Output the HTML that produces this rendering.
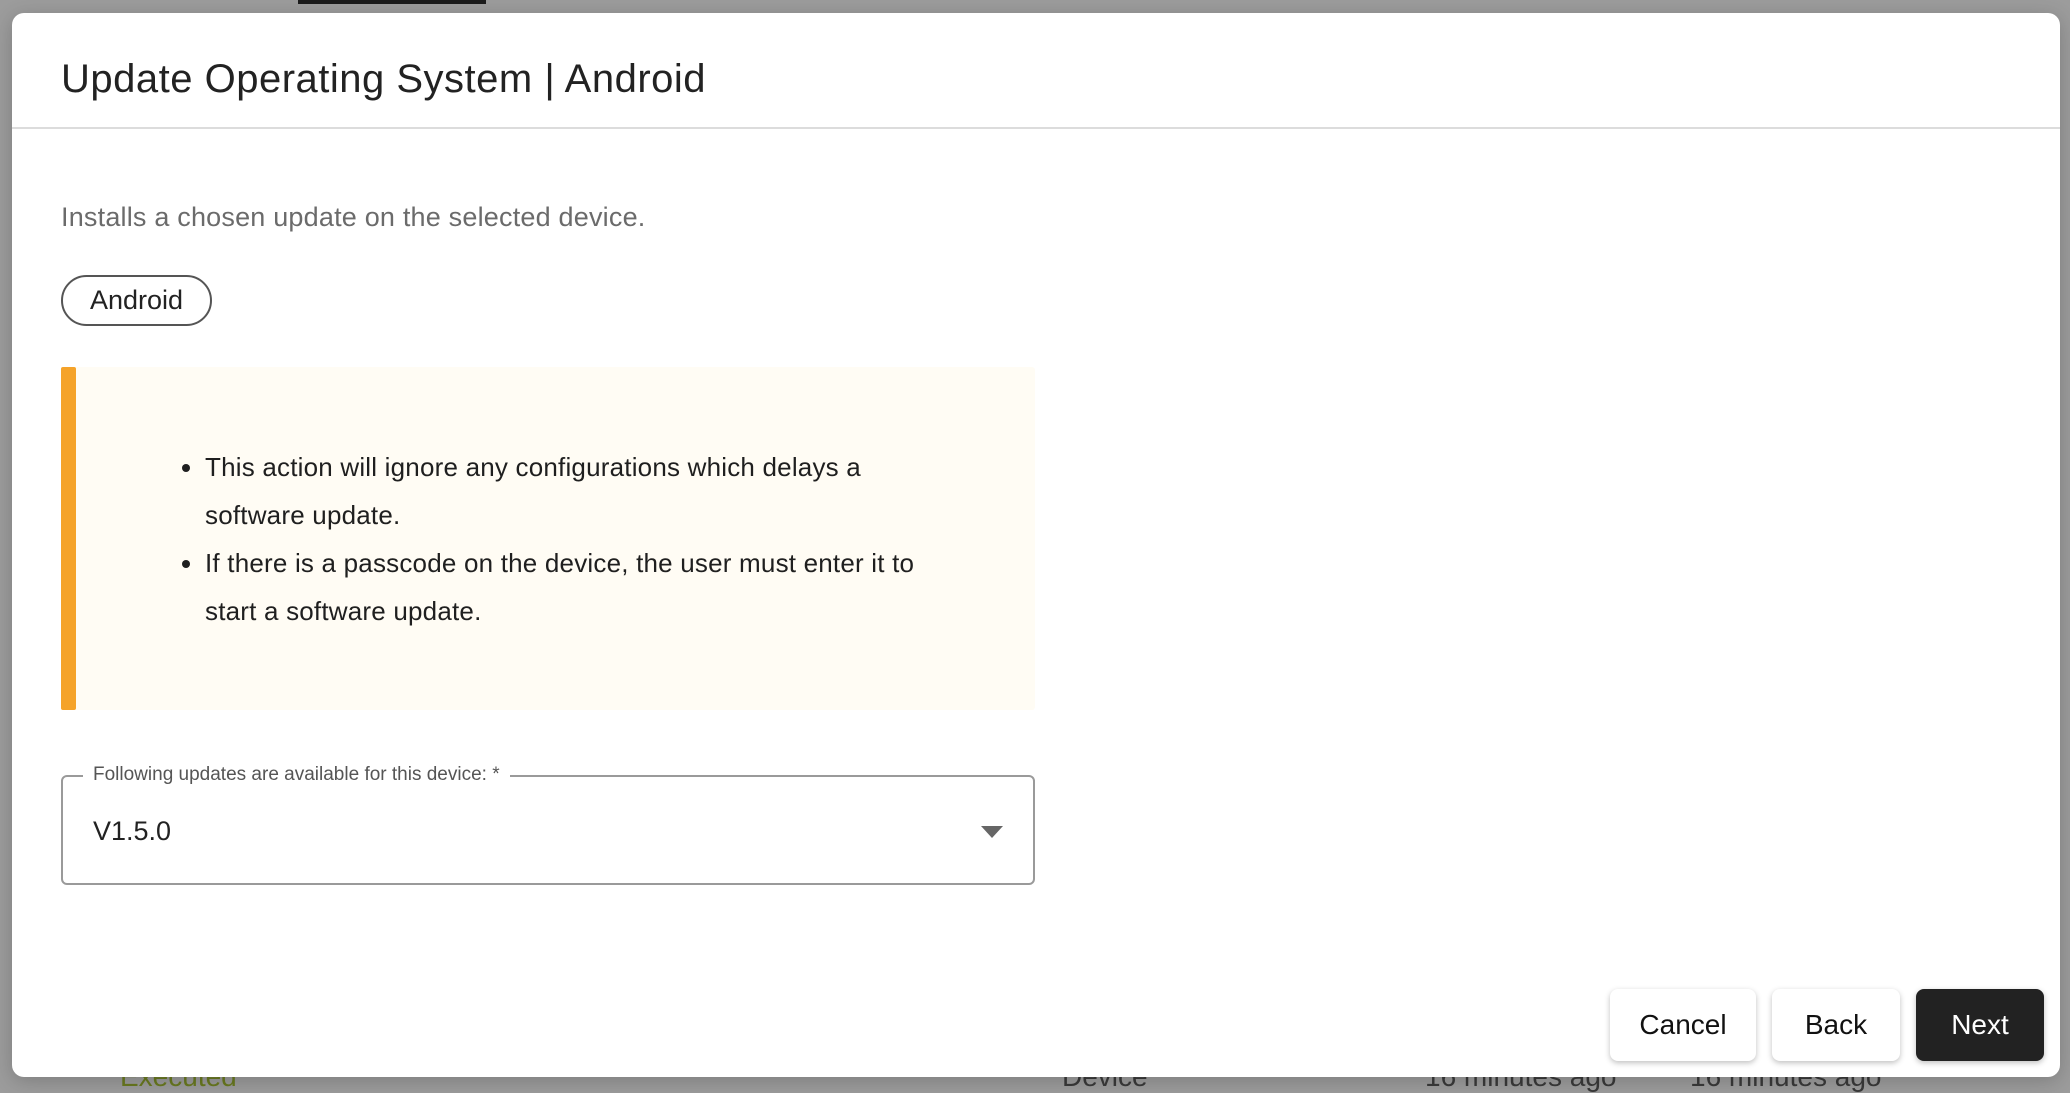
<!DOCTYPE html>
<html><head><meta charset="utf-8"><style>
*{box-sizing:border-box;margin:0;padding:0}
body{width:2070px;height:1088px;background:#9c9c9c;position:relative;overflow:hidden;font-family:"Liberation Sans",sans-serif;color:#1f1f1f}
.topbar{position:absolute;left:298px;top:0;width:188px;height:4px;background:#1c1c1c}
.bg-text{position:absolute;top:1061px;font-size:28px;color:#3a3a3a}
.modal{position:absolute;left:12px;top:13px;width:2048px;height:1064px;background:#fff;border-radius:12px;box-shadow:0 4px 20px rgba(0,0,0,.2)}
.title{position:absolute;left:49px;top:44px;font-size:40px;color:#222;letter-spacing:0.5px}
.hr{position:absolute;left:0;right:0;top:114px;height:2px;background:#dcdcdc}
.desc{position:absolute;left:49px;top:189px;font-size:27px;color:#6b6b6b;letter-spacing:0.2px}
.chip{position:absolute;left:49px;top:262px;width:151px;height:51px;border:2px solid #555;border-radius:26px;font-size:27px;text-align:center;line-height:47px;color:#222}
.warn{position:absolute;left:49px;top:354px;width:974px;height:343px;background:#fffcf4;border-radius:3px}
.warn .bar{position:absolute;left:0;top:0;bottom:0;width:15px;background:#f5a32a;border-radius:2px}
.warn ul{position:absolute;left:144px;top:76px;width:760px;font-size:26px;line-height:48px;color:#1f1f1f;letter-spacing:0.2px}
.warn li{margin-left:0;padding-left:0}
.sel{position:absolute;left:49px;top:762px;width:974px;height:110px;border:2px solid #9a9a9a;border-radius:6px}
.sel .lbl{position:absolute;left:20px;top:-13px;background:#fff;padding:0 10px;font-size:19px;color:#555}
.sel .val{position:absolute;left:30px;top:39px;font-size:27px;color:#222}
.sel .arr{position:absolute;right:30px;top:49px;width:0;height:0;border-left:11px solid transparent;border-right:11px solid transparent;border-top:12px solid #666}
.btn{position:absolute;top:976px;height:72px;border-radius:8px;font-size:28px;text-align:center;line-height:72px;background:#fff;color:#111;box-shadow:0 2px 6px rgba(0,0,0,.25)}
</style></head><body>
<div class="topbar"></div>
<div class="bg-text" style="left:120px;color:#6a7a20">Executed</div>
<div class="bg-text" style="left:1062px">Device</div>
<div class="bg-text" style="left:1425px">16 minutes ago</div>
<div class="bg-text" style="left:1690px">16 minutes ago</div>
<div class="modal">
<div class="title">Update Operating System | Android</div>
<div class="hr"></div>
<div class="desc">Installs a chosen update on the selected device.</div>
<div class="chip">Android</div>
<div class="warn"><div class="bar"></div>
<ul><li>This action will ignore any configurations which delays a<br>software update.</li><li>If there is a passcode on the device, the user must enter it to<br>start a software update.</li></ul></div>
<div class="sel"><div class="lbl">Following updates are available for this device: *</div><div class="val">V1.5.0</div><div class="arr"></div></div>
<div class="btn" style="left:1598px;width:146px">Cancel</div>
<div class="btn" style="left:1760px;width:128px">Back</div>
<div class="btn" style="left:1904px;width:128px;background:#222;color:#fff">Next</div>
</div>
</body></html>
